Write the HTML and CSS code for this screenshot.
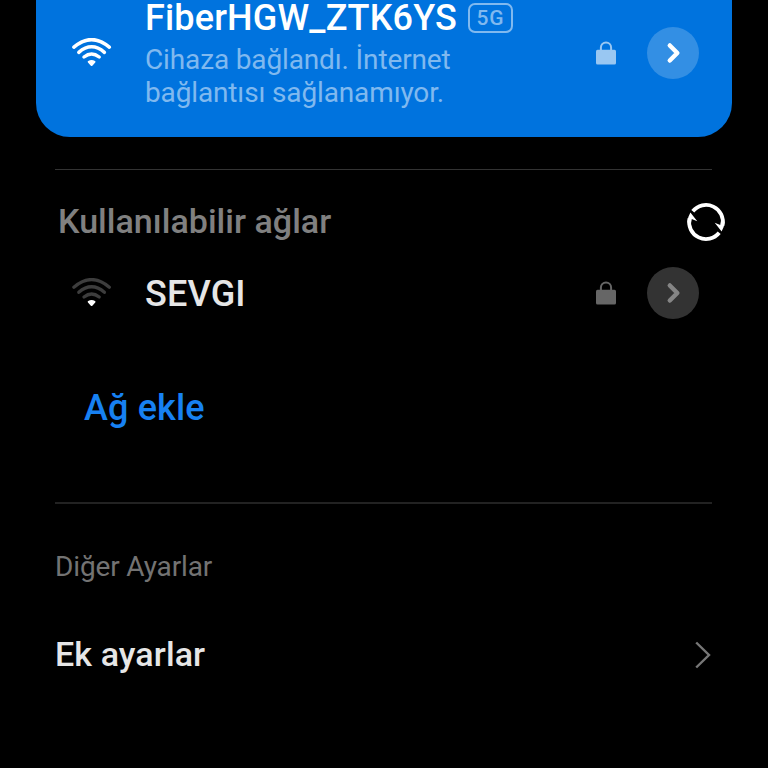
FILE: index.html
```html
<!DOCTYPE html>
<html lang="tr">
<head>
<meta charset="utf-8">
<title>Wi-Fi</title>
<link rel="stylesheet" href="styles.css">
</head>
<body>
<main class="screen">
  <section class="row connected">
    <svg class="wifi" viewBox="0 0 40 30" fill="none" stroke="#fff" stroke-width="3.5" stroke-linecap="round">
      <path d="M1.900 9.200Q19.600-6 37.300 9.200"/>
      <path d="M6.800 14.300Q19.600 3.300 32.400 14.300"/>
      <path d="M12 19Q19.600 13 27.200 19"/>
      <path d="M16.700 23.800Q19.600 22.200 22.500 23.800L19.600 27Z" fill="#fff" stroke-width="2" stroke-linejoin="round"/>
    </svg>
    <div class="info">
      <div class="title"><span class="name ssid">FiberHGW_ZTK6YS</span><span class="badge">5G</span></div>
      <p class="status">Cihaza bağlandı. İnternet<br>bağlantısı sağlanamıyor.</p>
    </div>
    <svg class="lock" viewBox="0 0 20 24"><path d="M4.900 10V6.500a5.100 5.100 0 0 1 10.200 0V10" fill="none" stroke="currentColor" stroke-width="2"/><rect y="8.700" width="20" height="14.700" rx="1.500" fill="currentColor"/></svg>
    <span class="more"><svg viewBox="0 0 52 52"><path d="M22.800 18.500L30.300 26L22.800 33.500"/></svg></span>
  </section>
  <hr class="divider">
  <header class="heading">
    <h2>Kullanılabilir ağlar</h2>
    <svg class="refresh" viewBox="0 0 40 40">
      <g id="half"><path d="M6.800 9.300A16.900 16.900 0 0 1 36.500 23.500" fill="none" stroke="#fff" stroke-width="3.800"/><path d="M28.700 20.700L34.300 23L35 19.500H38.700Q38.300 25 35.600 29.400Z" fill="#fff"/></g>
      <use href="#half" transform="rotate(180 20 20)"/>
    </svg>
  </header>
  <section class="row available">
    <svg class="wifi" viewBox="0 0 40 30" fill="none" stroke="#3d3d3d" stroke-width="3.300" stroke-linecap="round">
      <path d="M1.900 9.200Q19.600-6 37.300 9.200"/>
      <path d="M6.800 14.300Q19.600 3.300 32.400 14.300"/>
      <path d="M12 19Q19.600 13 27.200 19"/>
      <path d="M16.700 23.800Q19.600 22.200 22.500 23.800L19.600 27Z" fill="#fff" stroke="#fff" stroke-width="2" stroke-linejoin="round"/>
    </svg>
    <div class="info"><span class="name">SEVGI</span></div>
    <svg class="lock" viewBox="0 0 20 24"><path d="M4.900 10V6.500a5.100 5.100 0 0 1 10.200 0V10" fill="none" stroke="currentColor" stroke-width="2"/><rect y="8.700" width="20" height="14.700" rx="1.500" fill="currentColor"/></svg>
    <span class="more"><svg viewBox="0 0 52 52"><path d="M22.800 18.500L30.300 26L22.800 33.500"/></svg></span>
  </section>
  <a class="add">Ağ ekle</a>
  <hr class="divider">
  <h3>Diğer Ayarlar</h3>
  <div class="setting"><span>Ek ayarlar</span><svg class="chevron" viewBox="0 0 16 28"><path d="M1.200 1.500L14 14L1.200 26.500"/></svg></div>
</main>
</body>
</html>
```
FILE: styles.css
```css
* { box-sizing: border-box; }
body {
  margin: 0;
  background: #000;
  color: #e6e6e6;
  font-family: Roboto, sans-serif;
}
.screen {
  width: 768px;
  height: 768px;
  overflow: hidden;
  display: flex;
  flex-direction: column;
}
.row {
  display: flex;
  align-items: center;
  flex: none;
  margin: 0 36px;
  padding: 0 33px 0 36px;
}
.connected {
  height: 137px;
  padding-bottom: 31px;
  background: #0073de;
  border-radius: 0 0 34px 34px;
  color: #fff;
}
.available { height: 90px; }
.wifi { width: 40px; height: 30px; flex: none; margin-right: 33px; }
.info { flex: 1; }
.connected .info { padding-top: 2px; }
.title { display: flex; align-items: center; height: 37px; }
.name { font-size: 36px; line-height: 37px; font-weight: 500; letter-spacing: 0.17px; }
.badge {
  width: 45px;
  height: 30px;
  margin-left: 11px;
  border: 2px solid #80b9ef;
  border-radius: 7px;
  color: #80b9ef;
  font-size: 21px;
  font-weight: 500;
  line-height: 27px;
  letter-spacing: 0.8px;
  text-align: center;
}
.status { margin: 6px 0 0; font-size: 28px; line-height: 33px; letter-spacing: -0.14px; color: #80b9ef; }
.lock { width: 20px; height: 24px; flex: none; margin-right: 31px; color: #99c7f2; }
.more { width: 52px; height: 52px; flex: none; border-radius: 50%; background: #338fe4; }
.more svg { display: block; fill: none; stroke: #fff; stroke-width: 4.5px; stroke-linecap: round; stroke-linejoin: round; }
.available .lock { color: #666; }
.available .more { background: #333; }
.available .more svg { stroke: #858585; }
.available .name { padding-top: 2px; display: block; }
.divider {
  flex: none;
  width: 657px;
  height: 1px;
  margin: 32px 0 0 55px;
  border: 0;
  background: #333;
}
.heading {
  display: flex;
  align-items: center;
  justify-content: space-between;
  height: 52px;
  margin: 26px 42px 0 58px;
}
h2 { margin: -2px 0 0; font-size: 34px; font-weight: 500; line-height: 40px; color: #808080; letter-spacing: 0.03px; }
.refresh { width: 40px; height: 40px; }
.add { height: 139px; padding: 1px 0 0 84px; font-size: 36px; line-height: 139px; font-weight: 500; letter-spacing: 0.15px; color: #1781f2; }
.add + .divider { height: 2px; margin-top: 25px; background: #222; }
h3 { margin: 46px 0 0 55px; font-size: 28px; line-height: 34px; font-weight: 400; letter-spacing: -0.15px; color: #737373; }
.setting {
  display: flex;
  align-items: center;
  justify-content: space-between;
  height: 60px;
  margin: 41px 57px 0 55px;
  font-size: 34px;
  font-weight: 500;
  letter-spacing: 0.1px;
}
.setting span { margin-top: -2px; }
.chevron { width: 16px; height: 28px; fill: none; stroke: #777; stroke-width: 2.4px; }
```
